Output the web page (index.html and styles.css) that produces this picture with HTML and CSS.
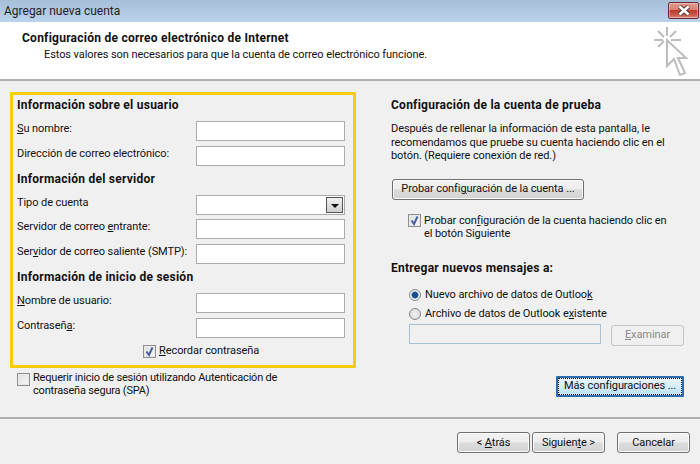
FILE: index.html
```html
<!DOCTYPE html>
<html lang="es">
<head>
<meta charset="utf-8">
<title>Agregar nueva cuenta</title>
<link rel="stylesheet" href="styles.css">
</head>
<body>
<div class="window">
  <div class="titlebar">
    <span class="title">Agregar nueva cuenta</span>
    <div class="close"><svg width="20" height="11" viewBox="0 0 20 11"><path d="M5.5 1.5 L14.5 9.5 M14.5 1.5 L5.5 9.5" stroke="#4a3a3a" stroke-width="4.4"/><path d="M5.5 1.5 L14.5 9.5 M14.5 1.5 L5.5 9.5" stroke="#fff" stroke-width="2.6"/></svg></div>
  </div>
  <header class="header">
    <div class="header-text">
      <h1>Configuración de correo electrónico de Internet</h1>
      <p>Estos valores son necesarios para que la cuenta de correo electrónico funcione.</p>
    </div>
    <svg class="cursor" width="34" height="50" viewBox="0 0 34 50" fill="none" stroke="#bdbdbd" stroke-width="2">
      <path d="M13 0 V9 M0 13 H9 M17 13 H27 M4 4 L10 10 M22 4 L16 10 M4 20 L10 14"/>
      <path d="M13 13 V39 L20 32 L26 48 L31 46 L24 31 L32 31 Z"/>
    </svg>
  </header>
  <main class="content">
    <div class="left">
      <section class="yellow">
        <h2>Información sobre el usuario</h2>
        <div class="row"><label><u>S</u>u nombre:</label><span class="input"></span></div>
        <div class="row"><label>Dirección de correo electrónico:</label><span class="input"></span></div>
        <h2 class="mid">Información del servidor</h2>
        <div class="row"><label>Tipo de cuenta</label><span class="input combo"><span class="arrow"></span></span></div>
        <div class="row tight"><label>Servidor de correo <u>e</u>ntrante:</label><span class="input"></span></div>
        <div class="row"><label>Ser<u>v</u>idor de correo saliente (SMTP):</label><span class="input"></span></div>
        <h2 class="mid">Información de inicio de sesión</h2>
        <div class="row"><label><u>N</u>ombre de usuario:</label><span class="input"></span></div>
        <div class="row"><label>Contraseñ<u>a</u>:</label><span class="input"></span></div>
        <div class="remember"><span class="check on"><svg width="11" height="11" viewBox="0 0 11 11"><path d="M2.5 5.5 L5 9 L8.5 1.5" fill="none" stroke="#4a5f9e" stroke-width="2"/></svg></span><span><u>R</u>ecordar contraseña</span></div>
      </section>
      <div class="spa"><span class="check"></span><span>Requerir inicio de sesión utilizando Autenticación de<br>contraseña segura (SPA)</span></div>
    </div>
    <div class="right">
      <h2>Configuración de la cuenta de prueba</h2>
      <p class="desc">Después de rellenar la información de esta pantalla, le<br>recomendamos que pruebe su cuenta haciendo clic en el<br>botón. (Requiere conexión de red.)</p>
      <button class="btn test">Probar confi<u>g</u>uración de la cuenta ...</button>
      <div class="testcheck"><span class="check on"><svg width="11" height="11" viewBox="0 0 11 11"><path d="M2.5 5.5 L5 9 L8.5 1.5" fill="none" stroke="#4a5f9e" stroke-width="2"/></svg></span><span>Probar con<u>f</u>iguración de la cuenta haciendo clic en<br>el botón Siguiente</span></div>
      <h2 class="deliver">Entregar nuevos mensajes a:</h2>
      <div class="radio first"><span class="dot on"></span><span>Nuevo archivo de datos de Outloo<u>k</u></span></div>
      <div class="radio"><span class="dot"></span><span>Archivo de datos de Outlook e<u>x</u>istente</span></div>
      <div class="browse"><span class="input disabled"></span><button class="btn examine"><u>E</u>xaminar</button></div>
      <div class="more-row"><button class="btn more">Más confi<u>g</u>uraciones ...</button></div>
    </div>
  </main>
  <footer class="footer">
    <button class="btn nav">&lt; <u>A</u>trás</button>
    <button class="btn nav">Siguien<u>t</u>e &gt;</button>
    <button class="btn nav cancel">Cancelar</button>
  </footer>
</div>
</body>
</html>
```
FILE: styles.css
```css
* { box-sizing: border-box; }
html, body { margin: 0; padding: 0; }
body { width: 700px; height: 464px; overflow: hidden; background: #f0f0f0; color: #111; font: 11px/14px Roboto, "Noto Sans", sans-serif; letter-spacing: -.08px; }
u { text-decoration: underline; text-underline-offset: 1px; }
.window { width: 700px; height: 464px; display: flex; flex-direction: column; }
.titlebar { height: 22px; flex: none; padding: 0 1px 0 4px; display: flex; justify-content: space-between; background: linear-gradient(#a7bed8, #bad2ec); }
.title { font-size: 12px; line-height: 22px; color: #222; letter-spacing: 0; }
.close { width: 31px; height: 17px; margin-top: 2px; border: 1px solid #6a2634; border-radius: 2px; display: flex; align-items: center; justify-content: center; background: linear-gradient(#dc9a8e 0, #d98073 45%, #b93c2c 50%, #c9584a 80%, #d98b7f 100%); box-shadow: inset 0 0 0 1px rgba(255,255,255,.35); }
.header { height: 59px; flex: none; background: #fff; border-bottom: 2px solid #b0b0b0; display: flex; justify-content: space-between; padding: 5px 0 0 22px; }
.header h1 { margin: 3px 0 0; font-size: 12px; line-height: 16px; font-weight: 700; color: #111; letter-spacing: .25px; }
.header p { margin: 1px 0 0 22px; line-height: 15px; }
.cursor { margin: 0 12px 0 0; flex: none; overflow: visible; }
.content { flex: 1; display: flex; border-bottom: 2px solid #b0b0b0; }
.left { width: 380px; flex: none; padding: 11px 0 0 10px; }
.yellow { width: 346px; height: 276px; border: 3px solid #f4cd0c; padding: 2px 8px 0 4px; }
h2 { margin: 0; font-size: 12px; line-height: 16px; font-weight: 700; color: #111; letter-spacing: .25px; }
.mid { margin-top: 5px; }
.row { height: 20px; margin-top: 5px; display: flex; justify-content: space-between; align-items: flex-start; }
.yellow h2 + .row { margin-top: 8px; }
.yellow .tight { margin-top: 4px; }
.row label { line-height: 15px; white-space: nowrap; }
.input { display: block; width: 149px; height: 20px; flex: none; background: #fff; border: 1px solid #ababab; }
.combo { display: flex; justify-content: flex-end; align-items: center; padding-right: 1px; }
.arrow { width: 17px; height: 16px; border: 1px solid #555; background: linear-gradient(#f0f0f0, #cfcfcf); position: relative; }
.arrow::after { content: ""; position: absolute; left: 4px; top: 6px; border: 4px solid transparent; border-top: 4px solid #111; border-bottom: 0; }
.check { display: inline-flex; align-items: center; justify-content: center; width: 13px; height: 13px; flex: none; border: 1px solid #8f8f8f; background: linear-gradient(135deg, #dedede, #f8f8f8); box-shadow: inset 0 0 0 1px #e8e8e8; }
.remember { margin: 5px 0 0 126px; display: flex; gap: 3px; align-items: center; height: 16px; }
.spa { margin: 3px 0 0 7px; display: flex; gap: 3px; line-height: 13px; align-items: flex-start; letter-spacing: -.2px; }
.spa .check { margin-top: 2px; }
.right { flex: 1; padding: 16px 16px 0 11px; white-space: nowrap; }
.desc { margin: 9px 0 0; line-height: 13.5px; }
.btn { font: inherit; letter-spacing: inherit; color: #111; padding: 0; height: 21px; border: 1px solid #707070; border-radius: 3px; background: linear-gradient(#f4f4f4 0, #ececec 48%, #dcdcdc 52%, #d3d3d3 100%); box-shadow: inset 0 0 0 1px #fbfbfb; }
.test { display: block; width: 192px; margin: 16px 0 0 1px; }
.testcheck { margin: 14px 0 0 17px; display: flex; gap: 3px; align-items: flex-start; line-height: 13px; }
.deliver { margin-top: 20px; }
.radio { display: flex; gap: 4px; align-items: center; height: 19px; margin-left: 18px; }
.radio.first { margin-top: 10px; }
.dot { width: 12px; height: 12px; border-radius: 50%; border: 1px solid #8a8a8a; background: radial-gradient(#f2f2f2, #d4d4d4); flex: none; }
.dot.on { background: radial-gradient(circle, #174f86 0 2.6px, #3d83c4 3.2px, #eee 3.9px); }
.browse { display: flex; margin: 0 0 0 18px; align-items: flex-start; gap: 10px; }
.disabled { width: 192px; height: 20px; background: #f0f0f0; border-color: #a8c0d8; }
.examine { width: 73px; margin-top: 1px; color: #8a8a8a; background: #f0f0f0; border-color: #c4c4c4; box-shadow: none; }
.more-row { display: flex; justify-content: flex-end; margin-top: 30px; }
.more { width: 128px; border-color: #2c6eb0; border-width: 2px; border-radius: 1px; background: linear-gradient(#eaf6fd, #bde2f7); outline: 1px dotted #111; outline-offset: -3px; }
.footer { height: 45px; flex: none; display: flex; padding: 13px 10px 0 0; justify-content: flex-end; gap: 2px; }
.nav { width: 73px; }
.cancel { margin-left: 10px; }
```
